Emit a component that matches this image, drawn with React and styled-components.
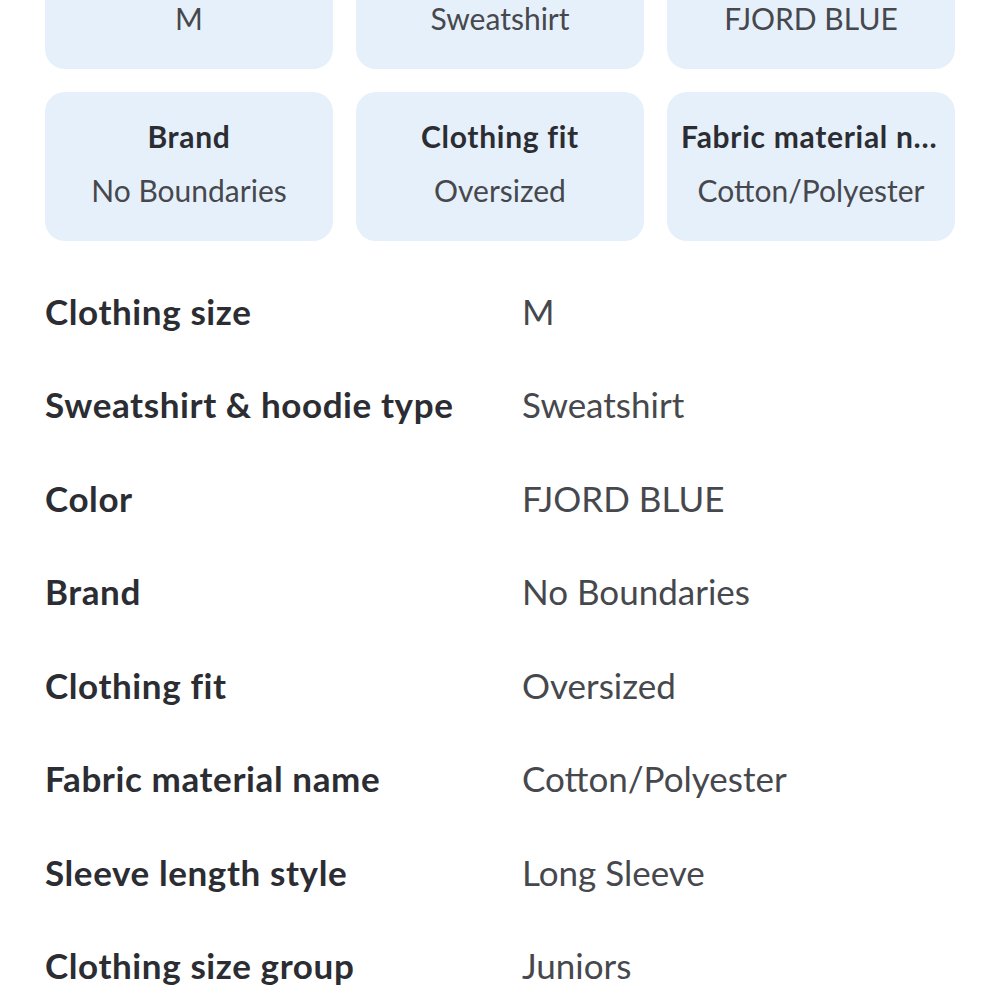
import React from 'react';
import styled, { createGlobalStyle } from 'styled-components';

const COLOR = {
  TEXT: '#2b2d33',
  VALUE: '#46484d',
  CARD: '#e6f0fa',
};

const highlights = [
  { title: 'Clothing size', value: 'M' },
  { title: 'Sweatshirt & hoodie type', value: 'Sweatshirt' },
  { title: 'Color', value: 'FJORD BLUE' },
  { title: 'Brand', value: 'No Boundaries' },
  { title: 'Clothing fit', value: 'Oversized' },
  { title: 'Fabric material name', value: 'Cotton/Polyester' },
];

const specs = [
  ['Clothing size', 'M'],
  ['Sweatshirt & hoodie type', 'Sweatshirt'],
  ['Color', 'FJORD BLUE'],
  ['Brand', 'No Boundaries'],
  ['Clothing fit', 'Oversized'],
  ['Fabric material name', 'Cotton/Polyester'],
  ['Sleeve length style', 'Long Sleeve'],
  ['Clothing size group', 'Juniors'],
];

const App = () => (
  <>
    <GlobalStyle />
    <StyledPage>
      <StyledCardGrid>
        {highlights.map(({ title, value }) => (
          <StyledCard key={title}>
            <StyledCardTitle>{title}</StyledCardTitle>
            <StyledCardValue>{value}</StyledCardValue>
          </StyledCard>
        ))}
      </StyledCardGrid>
      <StyledSpecList>
        {specs.map(([label, value]) => (
          <StyledSpecRow key={label}>
            <StyledSpecLabel>{label}</StyledSpecLabel>
            <StyledSpecValue>{value}</StyledSpecValue>
          </StyledSpecRow>
        ))}
      </StyledSpecList>
    </StyledPage>
  </>
);

const GlobalStyle = createGlobalStyle`
  body {
    margin: 0;
    background: #fff;
    font-family: Lato, "Noto Sans", sans-serif;
    color: ${COLOR.TEXT};
    overflow: hidden;
  }
`;

// page is scrolled: the first card row sits partly above the viewport
const StyledPage = styled.main`
  margin-top: -80px;
  padding: 0 45px;
`;

const StyledCardGrid = styled.section`
  display: grid;
  grid-template-columns: repeat(3, 288px);
  column-gap: 23px;
  row-gap: 23px;
`;

const StyledCard = styled.div`
  height: 149px;
  box-sizing: border-box;
  padding: 24px 14px 0;
  border-radius: 20px;
  background-color: ${COLOR.CARD};
  text-align: center;
  min-width: 0;
`;

const StyledCardTitle = styled.div`
  font-size: 30px;
  font-weight: 700;
  letter-spacing: 0.7px;
  line-height: 40px;
  white-space: nowrap;
  overflow: hidden;
  text-overflow: ellipsis;
`;

const StyledCardValue = styled.div`
  margin-top: 14px;
  font-size: 30px;
  line-height: 40px;
  color: ${COLOR.VALUE};
  white-space: nowrap;
  overflow: hidden;
  text-overflow: ellipsis;
`;

const StyledSpecList = styled.section`
  margin-top: 23px;
`;

const StyledSpecRow = styled.div`
  display: grid;
  grid-template-columns: 477px 1fr;
  height: 93.5px;
  align-items: center;
`;

const StyledSpecLabel = styled.div`
  font-size: 35px;
  font-weight: 700;
  letter-spacing: 0.6px;
  line-height: 44px;
`;

const StyledSpecValue = styled.div`
  font-size: 35px;
  line-height: 44px;
  color: ${COLOR.VALUE};
`;

export default App;
